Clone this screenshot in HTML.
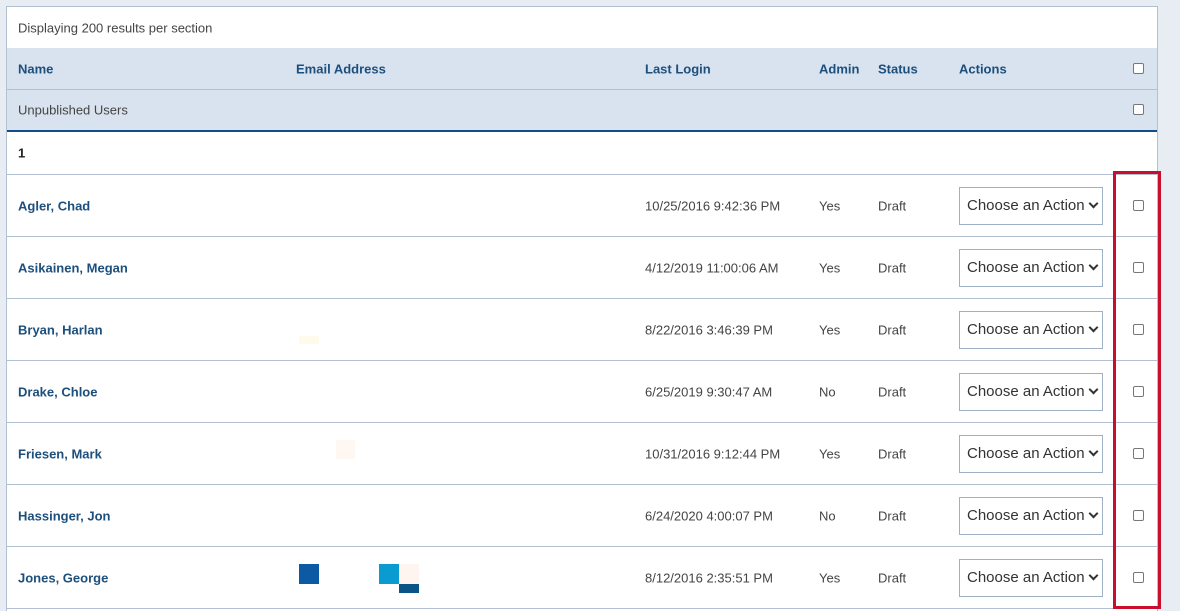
<!DOCTYPE html><html style="height:611px;overflow:hidden"><head><style>
body{margin:0;width:1180px;height:611px;background:#e8edf3;font-family:"Liberation Sans",sans-serif;overflow:hidden;position:relative}
.box{position:absolute;left:6px;top:6px;width:1150px;height:604px;background:#fff;border:1px solid #b3c0d1;border-bottom:none;overflow:hidden}
.r{position:absolute;left:0;width:1150px;border-bottom:1px solid #b3c0d1;font-size:13px}
.t{position:absolute;top:50%;transform:translateY(-50%);white-space:nowrap}
.hd{background:#d9e3ef}
.b{color:#1d4f7d;font-weight:bold}
.g{color:#444}
.cb{position:absolute;left:1126px;top:50%;margin-top:-6px;width:9px;height:9px;border:1px solid #777;border-radius:2px;background:#fff}
.sel{position:absolute;left:952px;top:50%;margin-top:-19px;width:142px;height:36px;border:1px solid #9fb0c4;box-sizing:content-box;font-size:15px;color:#333}
.sel span{position:absolute;left:7px;top:9px}
.sel i{position:absolute;right:5px;top:12px;width:5px;height:5px;border-right:2px solid #333;border-bottom:2px solid #333;transform:rotate(45deg)}
</style></head><body>
<div class="box">
<div class="r" style="top:0;height:41px"><span class="t g" style="left:11px">Displaying 200 results per section</span></div>
<div class="r hd" style="top:41px;height:41px"><span class="t b" style="left:11px">Name</span><span class="t b" style="left:289px">Email Address</span><span class="t b" style="left:638px">Last Login</span><span class="t b" style="left:812px">Admin</span><span class="t b" style="left:871px">Status</span><span class="t b" style="left:952px">Actions</span><div class="cb"></div></div>
<div class="r hd" style="top:83px;height:40px;border-bottom:2px solid #0d4f86"><span class="t g" style="left:11px">Unpublished Users</span><div class="cb"></div></div>
<div class="r" style="top:125px;height:42px"><span class="t b" style="left:11px;color:#222">1</span></div>
<div class="r" style="top:168px;height:61px"><span class="t b" style="left:11px">Agler, Chad</span><span class="t g" style="left:638px">10/25/2016 9:42:36 PM</span><span class="t g" style="left:812px">Yes</span><span class="t g" style="left:871px">Draft</span><div class="sel"><span>Choose an Action</span><i></i></div><div class="cb"></div></div>
<div class="r" style="top:230px;height:61px"><span class="t b" style="left:11px">Asikainen, Megan</span><span class="t g" style="left:638px">4/12/2019 11:00:06 AM</span><span class="t g" style="left:812px">Yes</span><span class="t g" style="left:871px">Draft</span><div class="sel"><span>Choose an Action</span><i></i></div><div class="cb"></div></div>
<div class="r" style="top:292px;height:61px"><span class="t b" style="left:11px">Bryan, Harlan</span><span class="t g" style="left:638px">8/22/2016 3:46:39 PM</span><span class="t g" style="left:812px">Yes</span><span class="t g" style="left:871px">Draft</span><div class="sel"><span>Choose an Action</span><i></i></div><div class="cb"></div></div>
<div class="r" style="top:354px;height:61px"><span class="t b" style="left:11px">Drake, Chloe</span><span class="t g" style="left:638px">6/25/2019 9:30:47 AM</span><span class="t g" style="left:812px">No</span><span class="t g" style="left:871px">Draft</span><div class="sel"><span>Choose an Action</span><i></i></div><div class="cb"></div></div>
<div class="r" style="top:416px;height:61px"><span class="t b" style="left:11px">Friesen, Mark</span><span class="t g" style="left:638px">10/31/2016 9:12:44 PM</span><span class="t g" style="left:812px">Yes</span><span class="t g" style="left:871px">Draft</span><div class="sel"><span>Choose an Action</span><i></i></div><div class="cb"></div></div>
<div class="r" style="top:478px;height:61px"><span class="t b" style="left:11px">Hassinger, Jon</span><span class="t g" style="left:638px">6/24/2020 4:00:07 PM</span><span class="t g" style="left:812px">No</span><span class="t g" style="left:871px">Draft</span><div class="sel"><span>Choose an Action</span><i></i></div><div class="cb"></div></div>
<div class="r" style="top:540px;height:61px"><span class="t b" style="left:11px">Jones, George</span><span class="t g" style="left:638px">8/12/2016 2:35:51 PM</span><span class="t g" style="left:812px">Yes</span><span class="t g" style="left:871px">Draft</span><div class="sel"><span>Choose an Action</span><i></i></div><div class="cb"></div></div>
</div>
<div style="position:absolute;left:299px;top:564px;width:20px;height:20px;background:#0b5aa3"></div>
<div style="position:absolute;left:379px;top:564px;width:20px;height:20px;background:#0a9bd0"></div>
<div style="position:absolute;left:399px;top:564px;width:20px;height:20px;background:#fff5f0"></div>
<div style="position:absolute;left:399px;top:584px;width:20px;height:9px;background:#0b5486"></div>
<div style="position:absolute;left:299px;top:336px;width:20px;height:8px;background:#fffbea"></div>
<div style="position:absolute;left:336px;top:440px;width:19px;height:19px;background:#fff8f2"></div>
<div style="position:absolute;left:1113px;top:171px;width:42px;height:432px;border:3px solid #c8102e"></div>
</body></html>
